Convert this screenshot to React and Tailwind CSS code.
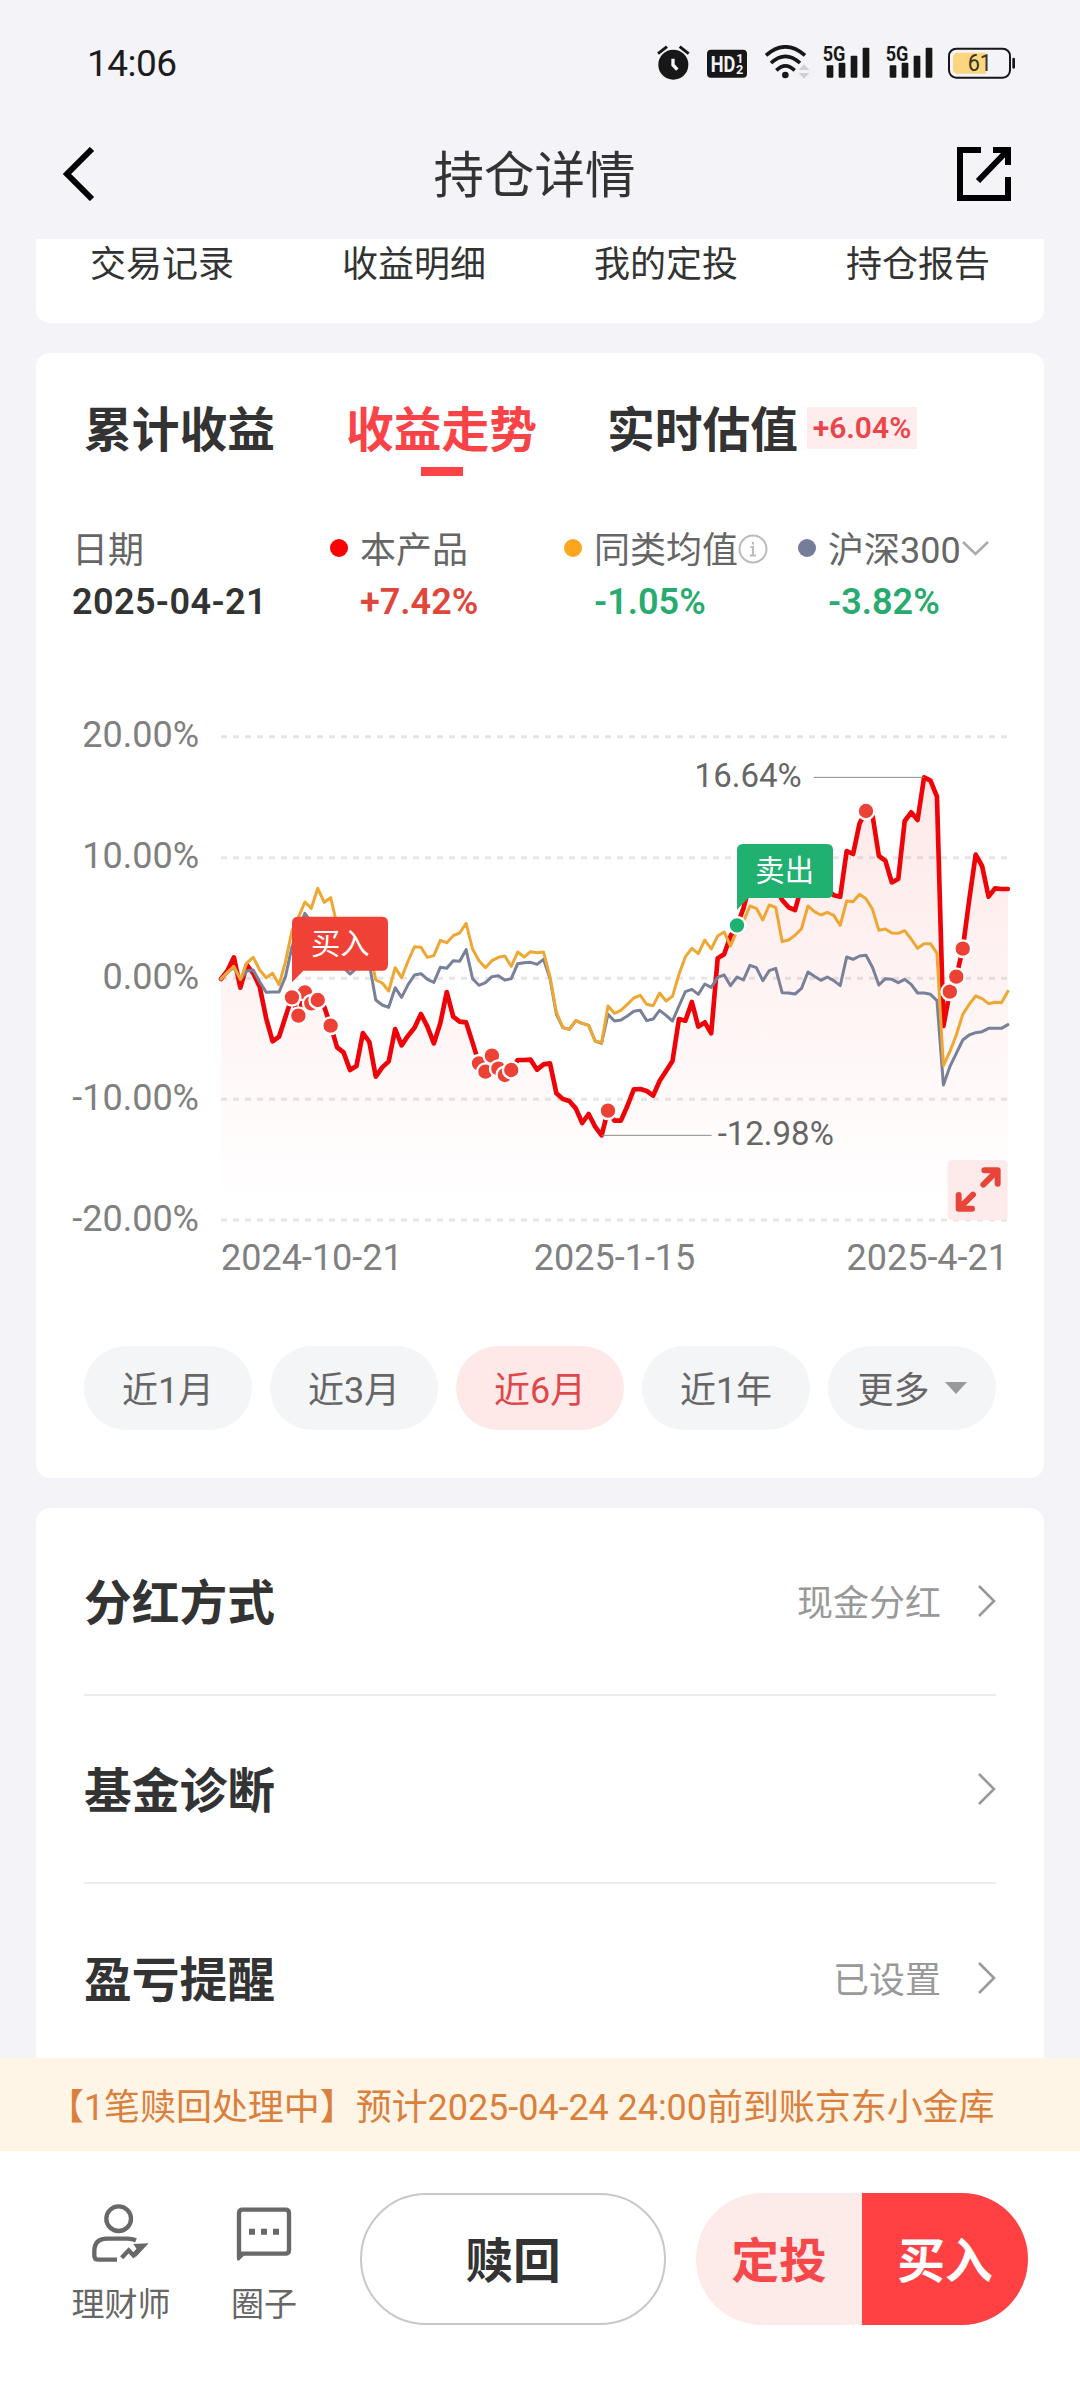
import React from "react";

const shortcuts = ["交易记录", "收益明细", "我的定投", "持仓报告"];

const ranges = ["近1月", "近3月", "近6月", "近1年"];

const settings = [
  { name: "分红方式", value: "现金分红" },
  { name: "基金诊断", value: "" },
  { name: "盈亏提醒", value: "已设置" },
];

const legend = [
  { name: "本产品", value: "+7.42%", dot: "bg-[#fb0006]", color: "text-[#df473c]" },
  { name: "同类均值", value: "-1.05%", dot: "bg-[#fea620]", color: "text-[#27ab6e]", info: true },
  { name: "沪深300", value: "-3.82%", dot: "bg-[#757d98]", color: "text-[#27ab6e]", arrow: true },
];

// Chart space: 2361 x 1452 units, +20% at y=2, -20% at y=1452
const STEP = 19.35;

const product = [
  729, 704, 664, 755, 687, 712, 752, 847, 916, 902, 842, 784, 839, 769, 802, 792, 812, 869, 934, 949,
  1002, 990, 891, 918, 1022, 994, 976, 879, 928, 899, 875, 834, 872, 922, 862, 768, 842, 857, 859, 920,
  982, 1007, 959, 998, 1017, 1002, 972, 972, 971, 1001, 985, 982, 1072, 1089, 1095, 1117, 1161, 1134, 1172, 1198,
  1124, 1154, 1154, 1110, 1060, 1059, 1065, 1079, 1035, 1005, 975, 849, 854, 798, 872, 859, 892, 667, 655, 600,
  568, 517, 442, 420, 430, 440, 455, 492, 514, 522, 452, 430, 440, 450, 460, 478, 482, 345, 354, 262,
  225, 237, 360, 374, 439, 429, 255, 229, 252, 124, 134, 182, 870, 767, 722, 638, 492, 356, 390, 482,
  457, 459, 459,
];

const average = [
  729, 709, 691, 730, 681, 664, 702, 725, 712, 746, 677, 585, 545, 498, 517, 457, 499, 485, 567, 600,
  620, 640, 620, 640, 732, 741, 765, 695, 725, 675, 632, 634, 664, 659, 613, 620, 599, 591, 562, 639,
  674, 695, 674, 664, 660, 691, 648, 663, 647, 650, 648, 722, 829, 875, 880, 854, 862, 868, 915, 920,
  810, 832, 823, 805, 786, 778, 805, 809, 771, 795, 781, 715, 662, 637, 653, 612, 639, 600, 588, 630,
  585, 557, 510, 517, 552, 507, 514, 617, 612, 598, 578, 510, 527, 537, 529, 538, 568, 495, 497, 475,
  488, 520, 583, 579, 591, 592, 584, 609, 637, 623, 623, 652, 989, 947, 897, 835, 805, 780, 788, 803,
  799, 800, 766,
];

const index300 = [
  729, 709, 694, 730, 705, 702, 737, 769, 768, 768, 722, 632, 582, 532, 557, 580, 600, 620, 660, 695,
  714, 697, 690, 685, 792, 807, 814, 755, 784, 746, 717, 713, 730, 739, 694, 697, 674, 676, 641, 728,
  748, 740, 722, 719, 732, 728, 683, 680, 679, 685, 670, 727, 835, 875, 880, 854, 862, 868, 915, 922,
  835, 855, 852, 840, 826, 823, 854, 849, 823, 838, 855, 810, 767, 760, 775, 744, 754, 724, 717, 749,
  723, 732, 688, 695, 734, 704, 697, 770, 771, 774, 757, 708, 721, 733, 723, 734, 749, 663, 670, 660,
  658, 694, 747, 728, 730, 740, 730, 745, 771, 771, 775, 794, 1047, 992, 952, 912, 897, 890, 887, 877,
  877, 877, 866,
];

const buyDays = [13, 14, 12, 11, 15, 17, 40, 42, 41, 43, 44, 45, 60, 100, 113, 114, 115];
const sellDay = 80;

const toPoints = (series) => series.map((y, i) => `${(i * STEP).toFixed(1)},${y}`).join(" ");

const StatusBar = () => (
  <div className="flex h-[124px] items-center justify-between pl-[87px] pr-[65px] text-[#1b1b1d]">
    <span className="pt-[2px] text-[37px] leading-[37px] tracking-[-0.5px]">14:06</span>
    <div className="flex h-[35px]">
      <svg className="h-[35px] w-[33px]" viewBox="50 43 99 105">
        <circle cx="99" cy="102" r="45" fill="#171717" />
        <path d="M53 69L80 48M145 69L118 48" stroke="#171717" strokeWidth="9" />
        <path d="M98 84V103L111 117" fill="none" stroke="#f4f3f8" strokeWidth="10" />
      </svg>
      <svg className="ml-[17px] h-[35px] w-[40px]" viewBox="201 43 120 105">
        <rect x="201" y="57" width="120" height="84" rx="12" fill="#171717" />
        <text x="212" y="123" fontSize="66" fontWeight="700" fill="#f4f3f8" textLength="74" lengthAdjust="spacingAndGlyphs">HD</text>
        <text x="289" y="96" fontSize="38" fontWeight="700" fill="#f4f3f8">1</text>
        <text x="288" y="130" fontSize="38" fontWeight="700" fill="#f4f3f8">2</text>
      </svg>
      <svg className="ml-[18px] h-[35px] w-[45px]" viewBox="375 43 135 105">
        <g fill="none" stroke="#171717" strokeWidth="11">
          <path d="M378 74Q436 23 495 74" />
          <path d="M393 97Q436 57 480 97" />
          <path d="M409 119Q436 92 464 119" />
        </g>
        <circle cx="436" cy="133" r="10" fill="#171717" />
        <path d="M476 118L492 101L508 118ZM476 127L492 144L508 127Z" fill="#d0d0d6" />
      </svg>
      <SignalIcon className="ml-[13px] h-[35px] w-[47px] overflow-visible" />
      <SignalIcon className="ml-[16px] h-[35px] w-[47px] overflow-visible" />
      <svg className="ml-[15px] h-[35px] w-[67px]" viewBox="924 43 201 105">
        <rect x="927" y="54" width="183" height="87" rx="22" fill="none" stroke="#171717" strokeWidth="6" />
        <path d="M954 66H1038V129H954Q939 129 939 114V81Q939 66 954 66Z" fill="#fad67f" />
        <rect x="1117" y="81" width="8" height="33" rx="4" fill="#171717" />
        <text x="983" y="122" fontSize="70" fill="#3a3222" textLength="73" lengthAdjust="spacingAndGlyphs">61</text>
      </svg>
    </div>
  </div>
);

const SignalIcon = ({ className }) => (
  <svg className={className} viewBox="548 43 141 105">
    <text x="547" y="90" fontSize="60" fontWeight="700" fill="#171717" textLength="68" lengthAdjust="spacingAndGlyphs">5G</text>
    <g fill="#171717">
      <rect x="559" y="104" width="20" height="37" rx="3" />
      <rect x="595" y="96" width="20" height="45" rx="3" />
      <rect x="631" y="75" width="20" height="66" rx="3" />
      <rect x="667" y="51" width="20" height="90" rx="3" />
    </g>
  </svg>
);

const Header = () => (
  <header className="flex h-[115px] items-center justify-between pl-[62px] pr-[69px] pb-[15px]">
    <svg className="h-[54px] w-[54px]" viewBox="0 0 54 54" fill="none" stroke="#000" strokeWidth="6">
      <path d="M30 2L5 27L30 52" />
    </svg>
    <h1 className="mr-[4px] pt-[4px] text-[50.500px] leading-[50px] text-[#333]">持仓详情</h1>
    <svg className="h-[54px] w-[54px]" viewBox="0 0 54 54" fill="none" stroke="#000" strokeWidth="6">
      <path d="M24 3H3V51H51V30" />
      <path d="M36 3H51V18M50 4L21 34" />
    </svg>
  </header>
);

const TrendChart = () => {
  const line = toPoints(product);
  return (
    <svg className="h-[484px] w-[787px] overflow-visible" viewBox="0 0 2361 1452">
      <defs>
        <linearGradient id="productFill" gradientUnits="userSpaceOnUse" x1="0" y1="124" x2="0" y2="1400">
          <stop offset="0" stopColor="#f4433c" stopOpacity="0.12" />
          <stop offset="1" stopColor="#f4433c" stopOpacity="0" />
        </linearGradient>
      </defs>
      {[2, 365, 727, 1090, 1452].map((y) => (
        <path key={y} d={`M0 ${y}H2361`} stroke="#e6e6e6" strokeWidth="9" strokeDasharray="18 18" />
      ))}
      <polygon points={`0,1452 ${line} 2361,1452`} fill="url(#productFill)" />
      <g fill="none" strokeLinejoin="round" strokeLinecap="round">
        <polyline points={line} stroke="#ee0408" strokeWidth="14" />
        <polyline points={toPoints(index300)} stroke="#78809a" strokeWidth="9" />
        <polyline points={toPoints(average)} stroke="#efa734" strokeWidth="9" />
      </g>

      {/* Max / min callouts */}
      <path d="M1778 124H2109M1142 1198H1472" stroke="#8c8c8c" strokeWidth="3" />
      <text x="1742" y="152" fontSize="99" textAnchor="end" fill="#666">16.64%</text>
      <text x="1490" y="1226" fontSize="99" fill="#666">-12.98%</text>

      {/* Trade markers */}
      {buyDays.map((day) => (
        <circle key={day} cx={day * STEP} cy={product[day]} r="25" fill="#ec4236" stroke="#fff" strokeWidth="7" />
      ))}
      <circle cx={sellDay * STEP} cy={product[sellDay]} r="25" fill="#1fb172" stroke="#fff" strokeWidth="7" />

      <path d="M213 739V560Q213 542 231 542H483Q501 542 501 560V686Q501 704 483 704H247Z" fill="#ef4136" />
      <text x="358" y="653" fontSize="88" textAnchor="middle" fill="#fff">买入</text>
      <path d="M1548 521V342Q1548 324 1566 324H1818Q1836 324 1836 342V468Q1836 486 1818 486H1582Z" fill="#20b070" />
      <text x="1691" y="435" fontSize="88" textAnchor="middle" fill="#fff">卖出</text>

      {/* Full screen toggle */}
      <rect x="2180" y="1272" width="180" height="180" rx="14" fill="#fdebeb" />
      <g fill="none" stroke="#e8453a" strokeWidth="18" strokeLinecap="round" strokeLinejoin="round">
        <path d="M2290 1303H2330V1343M2326 1307L2287 1346" />
        <path d="M2213 1377V1418H2253M2217 1414L2256 1376" />
      </g>
    </svg>
  );
};

const TrendCard = () => (
  <section className="mt-[30px] rounded-[14px] bg-white px-[48px] pt-[54px] pb-[48px]">
    <div className="flex">
      <span className="text-[47.750px] leading-[48px] font-bold text-[#333]">累计收益</span>
      <div className="ml-[71px] flex flex-col items-center">
        <span className="text-[47.750px] leading-[48px] font-bold text-[#fa4347]">收益走势</span>
        <span className="mt-[12px] h-[9px] w-[42px] bg-[#fb4246]"></span>
      </div>
      <span className="ml-[70px] text-[47.750px] leading-[48px] font-bold text-[#333]">实时估值</span>
      <span className="ml-[9px] h-[42px] w-[110px] bg-[#ffecec] text-center text-[30px] leading-[42px] font-semibold text-[#ec4549]">
        +6.04%
      </span>
    </div>

    <div className="-ml-[12px] mt-[57px] flex">
      <div className="w-[258px] shrink-0">
        <div className="text-[36px] leading-[36px] text-[#666]">日期</div>
        <div className="mt-[15px] text-[36px] leading-[36px] font-semibold tracking-[0.4px] text-[#333]">2025-04-21</div>
      </div>
      {legend.map((item) => (
        <div key={item.name} className="flex w-[234px] shrink-0">
          <span className={`mt-[6px] h-[18px] w-[18px] shrink-0 rounded-full ${item.dot}`}></span>
          <div className="ml-[12px]">
            <div className="flex items-center text-[36px] leading-[36px] whitespace-nowrap text-[#666]">
              {item.name}
              {item.info && (
                <svg className="mb-[4px] h-[30px] w-[30px]" viewBox="0 0 30 30" fill="none" stroke="#bbb" strokeWidth="2">
                  <circle cx="15" cy="15" r="13.5" />
                  <path d="M15 8V10.5M12.5 13H15V21M12 21.5H18" />
                </svg>
              )}
              {item.arrow && (
                <svg className="mb-[4px] h-[18px] w-[30px]" viewBox="1 0 30 18" fill="none" stroke="#aaa" strokeWidth="2.5">
                  <path d="M3 2L15.500 14L28 2" />
                </svg>
              )}
            </div>
            <div className={`mt-[15px] text-[36px] leading-[36px] font-semibold ${item.color}`}>{item.value}</div>
          </div>
        </div>
      ))}
    </div>

    <div className="-ml-[24px] mt-[98px] flex">
      <div className="-mt-px flex h-[520px] w-[139px] shrink-0 flex-col justify-between text-right text-[36px] leading-[36px] text-[#808080]">
        <span>20.00%</span>
        <span>10.00%</span>
        <span>0.00%</span>
        <span>-10.00%</span>
        <span>-20.00%</span>
      </div>
      <div className="ml-[22px] shrink-0 py-[18px]">
        <TrendChart />
      </div>
    </div>
    <div className="ml-[137px] -mr-[12px] mt-[2px] flex text-[36px] leading-[36px] text-[#808080]">
      <span>2024-10-21</span>
      <span className="ml-[131px]">2025-1-15</span>
      <span className="ml-auto">2025-4-21</span>
    </div>

    <div className="mt-[70px] flex gap-[18px]">
      {ranges.map((r) => (
        <button
          key={r}
          className={`h-[84px] w-[168px] rounded-full pt-[5px] text-[36px] leading-[36px] ${
            r === "近6月" ? "bg-[#fee8e8] text-[#e0474b]" : "bg-[#f4f5f7] text-[#666]"
          }`}
        >
          {r}
        </button>
      ))}
      <button className="flex h-[84px] w-[168px] items-center justify-center gap-[15px] rounded-full bg-[#f4f5f7] pt-[5px] text-[36px] leading-[36px] text-[#666]">
        更多
        <span className="mb-[6px] border-x-[11px] border-t-[12px] border-x-transparent border-t-[#999]"></span>
      </button>
    </div>
  </section>
);

const SettingsCard = () => (
  <section className="mt-[30px] h-[550px] overflow-hidden rounded-t-[14px] bg-white px-[48px]">
    {settings.map((s, i) => (
      <div
        key={s.name}
        className={`flex h-[188px] items-center ${i < settings.length - 1 ? "border-b-2 border-[#ececec]" : ""}`}
      >
        <span className="flex-1 pt-[5px] text-[47.750px] leading-[48px] font-bold text-[#333]">{s.name}</span>
        <span className="pt-[5px] text-[36px] leading-[36px] text-[#999]">{s.value}</span>
        <svg className="ml-[35px] h-[34px] w-[20px]" viewBox="0 0 20 34" fill="none" stroke="#999" strokeWidth="2.600">
          <path d="M3 2L18 17L3 32" />
        </svg>
      </div>
    ))}
  </section>
);

const BottomBar = () => (
  <footer className="flex h-[249px] bg-white pl-[70px] pt-[42px]">
    <div className="flex w-[102px] flex-col items-center pt-[10px]">
      <svg className="h-[60px] w-[60px]" viewBox="95 40 180 180">
        <g fill="none" stroke="#686868" strokeWidth="13">
          <circle cx="178" cy="87" r="37" />
          <path d="M230 152Q218 147 204 147H143Q105 147 105 185V198Q105 210 118 210H173" />
          <path d="M187 204L208 182L222 197L240 178" />
        </g>
        <path d="M222 163L268 161L226 206L236 184Z" fill="#686868" />
      </svg>
      <span className="mt-[25px] text-[33px] leading-[33px] text-[#666]">理财师</span>
    </div>
    <div className="ml-[41px] flex w-[102px] flex-col items-center pt-[10px]">
      <svg className="h-[60px] w-[60px]" viewBox="522 40 180 180">
        <path d="M537 205V71Q537 60 548 60H676Q687 60 687 71V181Q687 192 676 192H537" fill="none" stroke="#686868" strokeWidth="13" />
        <path d="M531 188H562L538 212Q531 216 531 208Z" fill="#686868" />
        <path d="M567 117h18v18h-18zM603 117h18v18h-18zM639 117h18v18h-18z" fill="#686868" />
      </svg>
      <span className="mt-[25px] text-[33px] leading-[33px] text-[#666]">圈子</span>
    </div>
    <button className="ml-[45px] h-[132px] w-[306px] rounded-full border-2 border-[#c8c8c8] pt-[5px] text-[47.750px] leading-[48px] font-bold text-[#333]">
      赎回
    </button>
    <div className="ml-[30px] flex h-[132px] w-[332px] overflow-hidden rounded-full text-[47.750px] leading-[48px] font-bold">
      <button className="flex-1 bg-[#fdebea] pt-[5px] text-[#f6474a]">定投</button>
      <button className="flex-1 bg-[#ff4143] pt-[5px] text-white">买入</button>
    </div>
  </footer>
);

const App = () => {
  return (
    <div className="flex h-[2400px] w-[1080px] flex-col overflow-hidden bg-[#f3f3f8] font-[Roboto,'Noto_Sans_CJK_SC',sans-serif]">
      <StatusBar />
      <Header />
      <main className="h-[1819px] px-[36px]">
        <div className="grid h-[84px] grid-cols-4 rounded-b-[14px] bg-white pt-[8px] text-center text-[36px] leading-[36px] text-[#333]">
          {shortcuts.map((s) => (
            <span key={s}>{s}</span>
          ))}
        </div>
        <TrendCard />
        <SettingsCard />
      </main>
      <div className="h-[93px] bg-[#fff5e7] pt-[3px] pl-[48px] text-[36px] leading-[90px] tracking-[-0.06px] whitespace-nowrap text-[#da803c]">
        <span className="inline-block pt-[2px]">【1笔赎回处理中】预计2025-04-24 24:00前到账京东小金库</span>
      </div>
      <BottomBar />
    </div>
  );
};

export default App;
